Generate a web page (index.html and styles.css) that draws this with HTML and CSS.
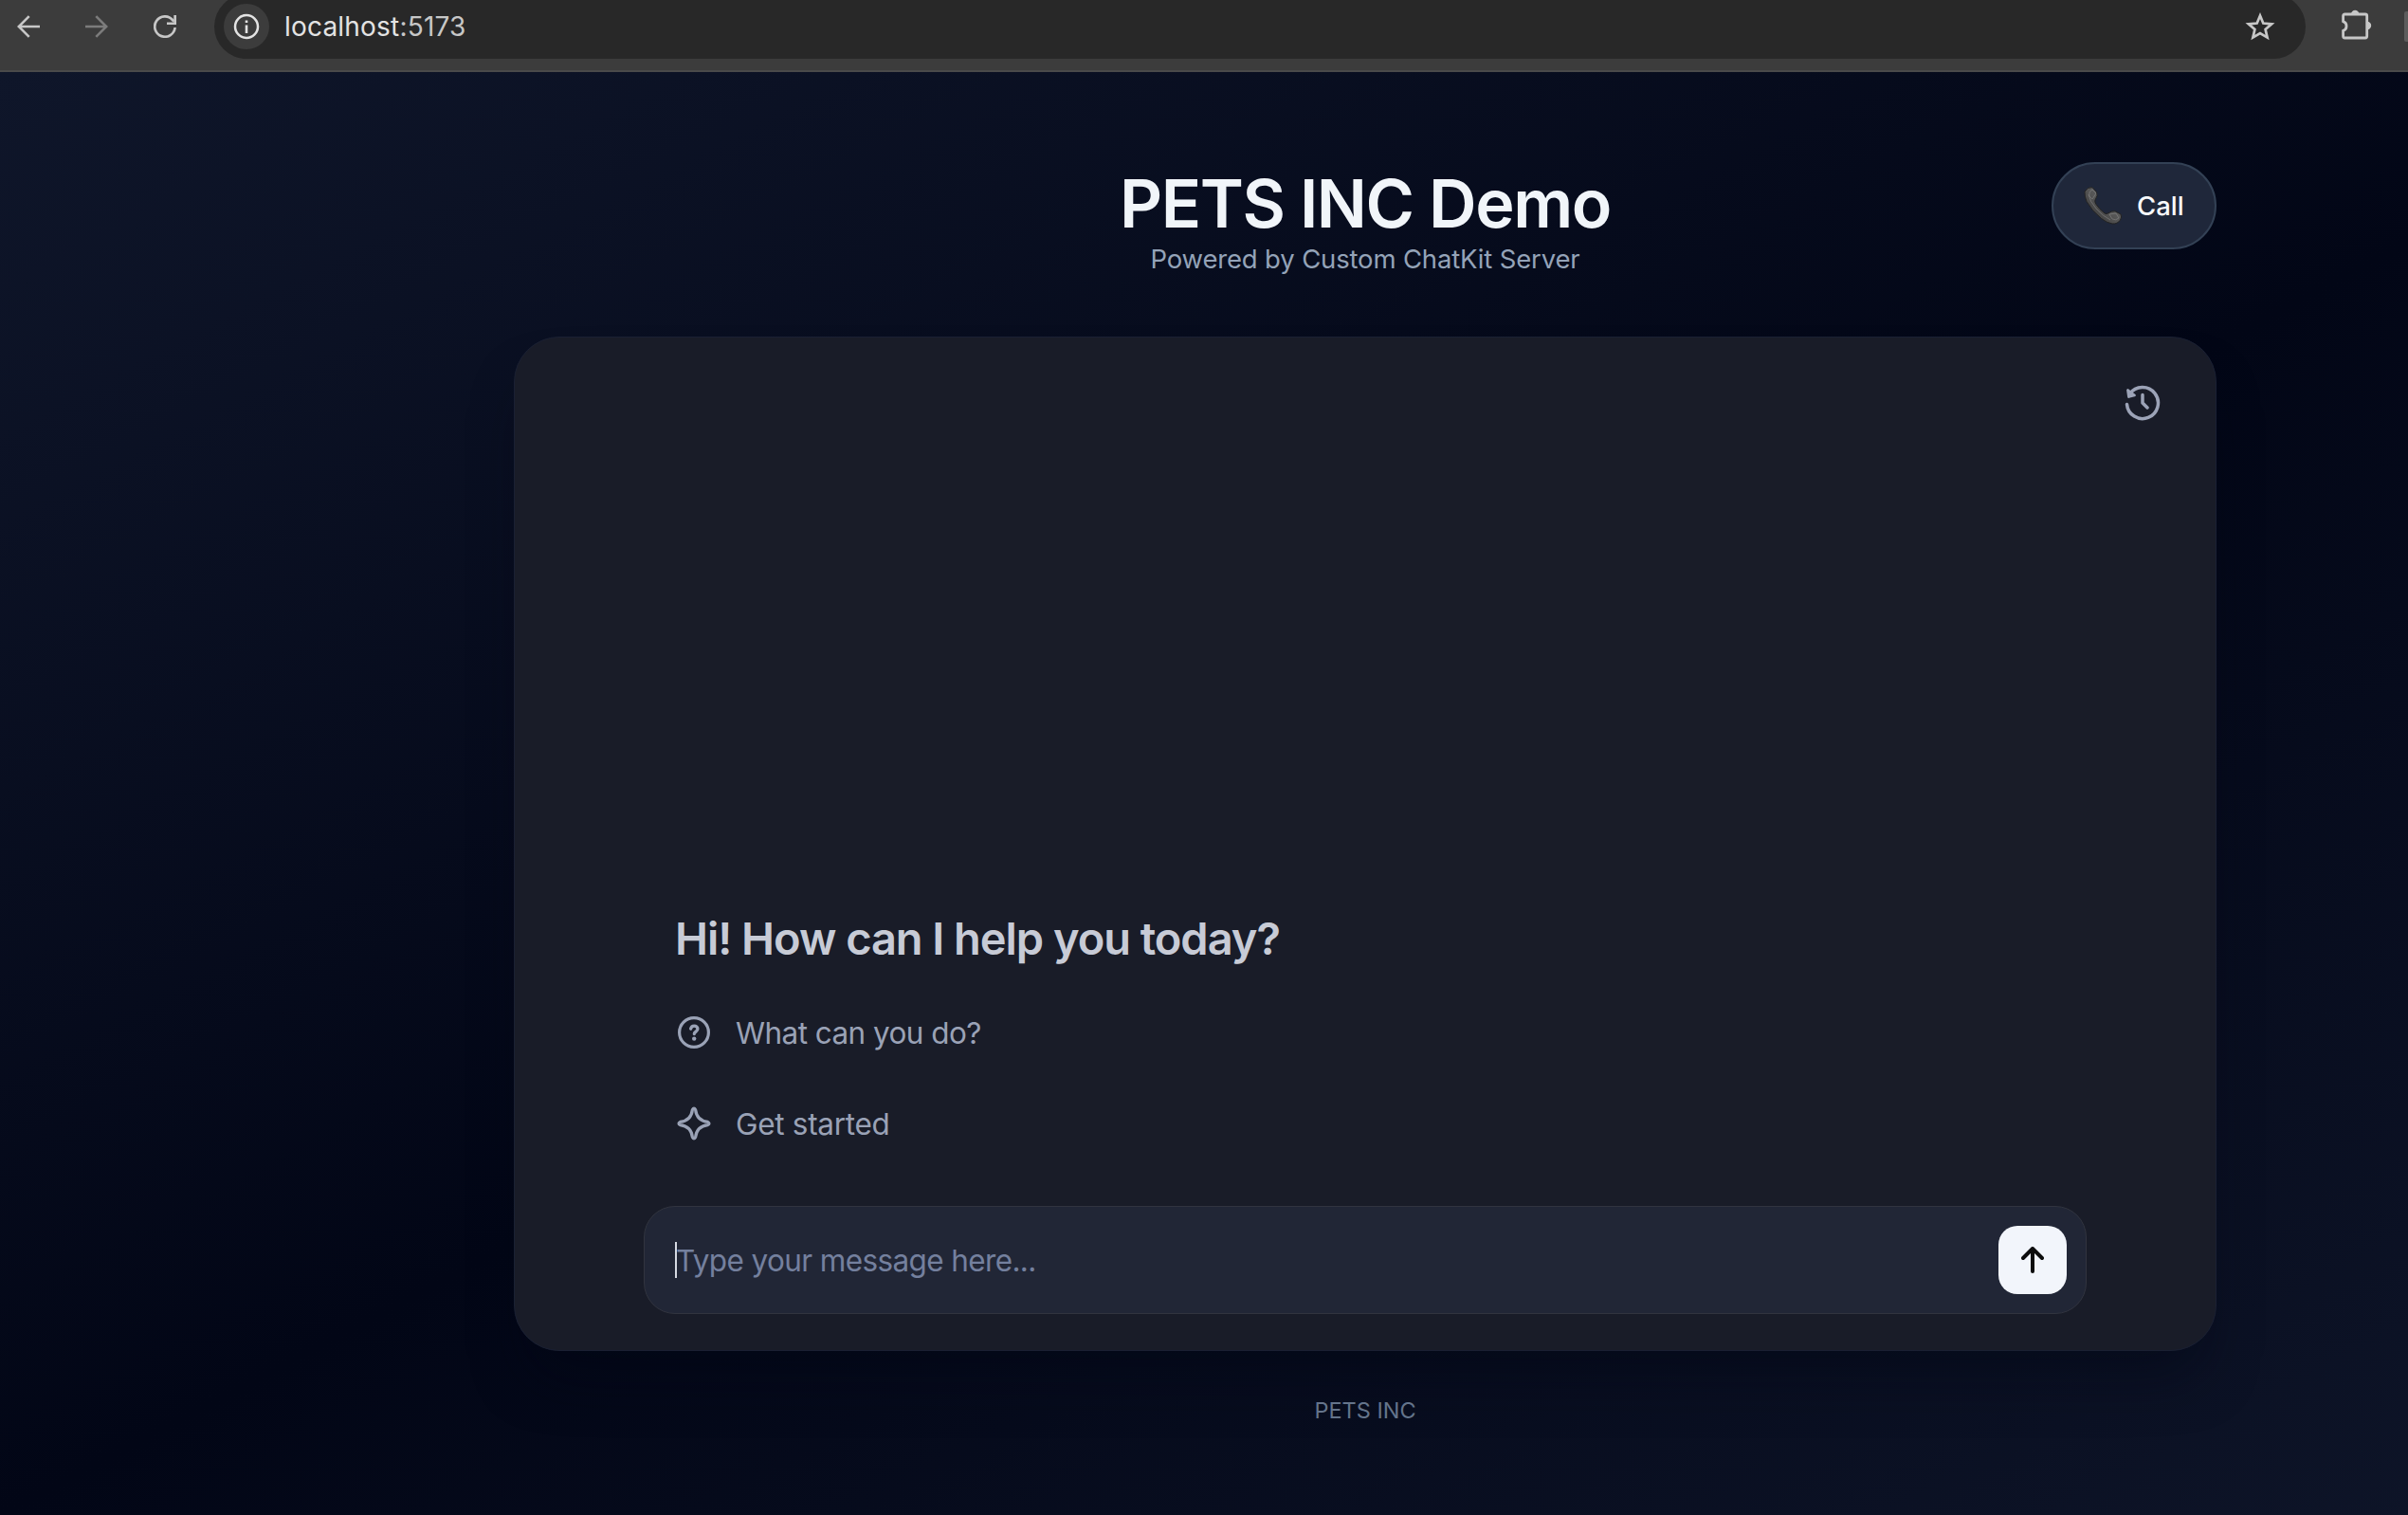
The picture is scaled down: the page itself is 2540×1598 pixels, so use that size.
FILE: index.html
```html
<!DOCTYPE html>
<html lang="en">
<head>
<meta charset="utf-8">
<title>PETS INC Demo</title>
<link rel="stylesheet" href="styles.css">
</head>
<body>
<div class="toolbar">
  <nav class="nav">
    <svg class="nav-icon" viewBox="0 0 24 24"><path d="M24 12H2M12.7 1.2 1.8 12l10.9 10.8" fill="none" stroke="currentColor" stroke-width="2.6"/></svg>
    <svg class="nav-icon dim" viewBox="0 0 24 24"><path d="M0 12h22M11.3 1.2 22.2 12 11.3 22.8" fill="none" stroke="currentColor" stroke-width="2.6"/></svg>
    <svg class="nav-icon" viewBox="0 0 24 24"><path d="M22.600 13A10.700 10.700 0 1 1 20 5l1.500 1.700" fill="none" stroke="currentColor" stroke-width="2.700"/><path d="M24 0v10H14V7.500h7.300V0z" fill="currentColor"/></svg>
  </nav>
  <div class="address">
    <span class="site-info"><svg viewBox="0 0 28 28"><circle cx="14" cy="14" r="12" fill="none" stroke="currentColor" stroke-width="2.500"/><path d="M12.700 12.500h2.600V21h-2.600zM12.700 7.500h2.600v2.600h-2.600z" fill="currentColor"/></svg></span>
    <span class="url">localhost<span class="port">:5173</span></span>
    <svg class="star" viewBox="0 0 32 30"><path d="M16 3.500l3.300 8 8.900.800-6.600 5.700 2 8.600L16 22.100 8.400 26.600l2-8.600-6.600-5.700 8.900-.800z" fill="none" stroke="currentColor" stroke-width="2.700"/></svg>
  </div>
  <svg class="puzzle" viewBox="0 0 34 34"><path d="M5.300 6H27q1.700 0 1.700 1.700V29.300q0 1.700-1.700 1.700H5.300q-1.700 0-1.700-1.700V23.400a5.200 5.200 0 0 0 0-9.800V7.700Q3.600 6 5.300 6z" fill="none" stroke="currentColor" stroke-width="2.800"/><path d="M12 6a4.200 4.200 0 0 1 8.400 0zM29 13.800a4.200 4.200 0 0 1 0 8.400z" fill="currentColor"/></svg>
  <span class="divider"></span>
</div>
<div class="page">
  <main class="column">
    <header class="header">
      <div class="titles">
        <h1 class="title">PETS INC Demo</h1>
        <p class="subtitle">Powered by Custom ChatKit Server</p>
      </div>
      <button class="call">
        <svg class="phone" viewBox="0 0 40 40"><defs><linearGradient id="handset" x1="0" y1="1" x2="1" y2="0"><stop offset="0" stop-color="#2c2c2c"/><stop offset=".5" stop-color="#555"/><stop offset="1" stop-color="#6b6b6b"/></linearGradient></defs><path d="M1 5Q4 0 9 .6L13.500 5.500Q15.500 9 12 14q-.800 1.800 1 4.500 3.700 5.500 9 9.500 2 1.200 3.500 0 4-2.700 7.500-2.200L39 29q1.500 3-.500 6-3 4.500-8.500 4-5.500-.800-11.500-5.500Q8 25 3 15.500.500 10 1 5z" fill="url(#handset)" stroke="#222" stroke-width="1"/><path d="M5 8q1 7 8 15t15 12M9 3q-4 2-3 7l3 3 4-6zM27 29l7-1 3 5q-3 3-7 1z" fill="none" stroke="#858585" stroke-width="1" opacity=".6"/></svg>
        <span>Call</span>
      </button>
    </header>
    <section class="card">
      <div class="card-top">
        <svg class="history" viewBox="0 0 40 40"><path d="M3.500 21.500A16.500 16.500 0 1 0 6.500 10.500M20 11.500v8.500l5 5" fill="none" stroke="currentColor" stroke-width="3.500" stroke-linecap="round" stroke-linejoin="round"/><path d="M4.500 6.500 5.500 13.500 11.500 12z" fill="currentColor" stroke="currentColor" stroke-width="2.800" stroke-linejoin="round"/></svg>
      </div>
      <div class="start">
        <h2 class="greeting">Hi! How can I help you today?</h2>
        <div class="prompt">
          <svg class="prompt-icon" viewBox="0 0 36 36"><circle cx="18" cy="18" r="15.400" fill="none" stroke="currentColor" stroke-width="3.200"/><path d="M14.600 14.200c.5-2.200 2-3.100 3.700-3.100 2 0 3.600 1.300 3.600 3.200 0 2.700-3.600 2.900-3.600 5.300" fill="none" stroke="currentColor" stroke-width="3.300" stroke-linecap="round"/><circle cx="18.200" cy="24.600" r="2.200" fill="currentColor"/></svg>
          <span>What can you do?</span>
        </div>
        <div class="prompt second">
          <svg class="prompt-icon" viewBox="0 0 36 36"><path d="M16.400 3.500Q18 .500 19.600 3.500C20.500 11 25 15.500 32.500 16.400Q35.500 18 32.500 19.600C25 20.500 20.500 25 19.600 32.500Q18 35.500 16.400 32.500C15.500 25 11 20.500 3.500 19.600Q.500 18 3.500 16.400C11 15.500 15.500 11 16.400 3.500z" fill="none" stroke="currentColor" stroke-width="3.200" stroke-linejoin="round"/></svg>
          <span>Get started</span>
        </div>
      </div>
      <div class="composer">
        <span class="caret"></span>
        <span class="placeholder">Type your message here...</span>
        <button class="send"><svg viewBox="0 0 24 28"><path d="M12 26V2.500M2 12 12 2l10 10" fill="none" stroke="currentColor" stroke-width="4" stroke-linecap="round" stroke-linejoin="round"/></svg></button>
      </div>
    </section>
    <footer class="footer">PETS INC</footer>
  </main>
</div>
</body>
</html>
```
FILE: styles.css
```css
* { box-sizing: border-box; }
body {
  margin: 0;
  width: 2540px;
  height: 1598px;
  overflow: hidden;
  background: #020617;
  font-family: Inter, "Liberation Sans", sans-serif;
}
h1, h2, p { margin: 0; }
button { font: inherit; padding: 0; border: 0; }
svg { display: block; flex: none; }

.toolbar {
  display: flex;
  height: 76px;
  overflow: hidden;
  background: #3c3c3c;
  border-bottom: 2px solid #4a4a4a;
  color: #c7c7c7;
}
.nav {
  display: flex;
  gap: 48px;
  width: 226px;
  height: 56px;
  padding-left: 18px;
  align-items: center;
}
.nav-icon { width: 24px; height: 24px; }
.dim { color: #7c7c7c; }
.address {
  display: flex;
  align-items: center;
  width: 2206px;
  height: 68px;
  margin-top: -6px;
  padding: 0 32px 0 10px;
  border-radius: 34px;
  background: #282828;
}
.site-info {
  display: grid;
  place-items: center;
  width: 48px;
  height: 48px;
  border-radius: 50%;
  background: #3c3c3c;
  color: #e3e3e3;
}
.site-info svg { width: 28px; height: 28px; }
.url {
  flex: 1;
  padding-left: 16px;
  font-size: 28px;
  line-height: 40px;
  letter-spacing: .2px;
  color: #e3e3e3;
}
.port { color: #c7c7c7; }
.star { width: 32px; height: 30px; }
.puzzle { width: 34px; height: 34px; margin: 9px 0 0 36px; }
.divider {
  width: 4px;
  height: 32px;
  margin: 12px 0 0 34px;
  border-radius: 2px 0 0 2px;
  background: #5c5c5c;
}

.page {
  width: 2540px;
  height: 1522px;
  padding-left: 542px;
  background: linear-gradient(to bottom right, #0f162a, #020616 50%, #0f162a) 0 0 / 2880px 100% no-repeat;
}
.column { width: 1796px; }
.header {
  display: grid;
  grid-template-columns: 174px 1fr 174px;
  height: 279px;
  padding-top: 95px;
}
.titles { grid-column: 2; padding-top: 4px; text-align: center; }
.title {
  font-size: 70px;
  font-weight: 600;
  line-height: 80px;
  letter-spacing: -1.400px;
  color: #f1f5f9;
}
.subtitle {
  margin-top: -2px;
  font-size: 27.500px;
  line-height: 40px;
  letter-spacing: -.160px;
  color: #94a3b8;
}
.call {
  display: flex;
  align-items: center;
  height: 92px;
  padding-left: 32px;
  gap: 16px;
  border: 2px solid #334155;
  border-radius: 46px;
  background: #1f273a;
  color: #f8fafc;
  font-size: 27.500px;
  font-weight: 500;
}
.phone { width: 40px; height: 40px; }

.card {
  display: flex;
  flex-direction: column;
  height: 1070px;
  padding: 0 136px 38px;
  border: 1px solid #1a2033;
  border-radius: 48px;
  background: #191c28;
  box-shadow: 0 40px 60px -20px rgba(2, 5, 20, .5);
}
.card-top {
  display: flex;
  justify-content: flex-end;
  margin-right: -79px;
  padding-top: 49px;
}
.history { width: 40px; height: 40px; color: #9ca3b7; }
.start {
  display: flex;
  flex-direction: column;
  margin-top: auto;
  padding: 0 34px 39px 35px;
  color: #9aa2b6;
}
.greeting {
  margin: 0 0 19px -2px;
  font-size: 47px;
  font-weight: 600;
  line-height: 64px;
  letter-spacing: -1.050px;
  color: #c7cbd6;
}
.prompt {
  display: flex;
  align-items: center;
  gap: 26px;
  height: 96px;
  font-size: 31.500px;
  letter-spacing: -.560px;
}
.second { letter-spacing: -.300px; }
.prompt-icon { width: 36px; height: 36px; }
.composer {
  display: flex;
  align-items: center;
  height: 114px;
  padding: 0 20px 0 32px;
  border: 1px solid #31343f;
  border-radius: 33px;
  background: #212636;
}
.caret {
  width: 2px;
  height: 38px;
  margin-right: -1px;
  background: #d5d9e2;
}
.placeholder {
  flex: 1;
  font-size: 31.500px;
  letter-spacing: -.620px;
  color: #74809e;
}
.send {
  display: grid;
  place-items: center;
  width: 72px;
  height: 72px;
  border-radius: 20px;
  background: #f2f5fb;
  color: #0d0d0d;
}
.send svg { width: 24px; height: 28px; }
.footer {
  padding-top: 47px;
  text-align: center;
  font-size: 23.500px;
  line-height: 32px;
  color: #64748b;
}
```
